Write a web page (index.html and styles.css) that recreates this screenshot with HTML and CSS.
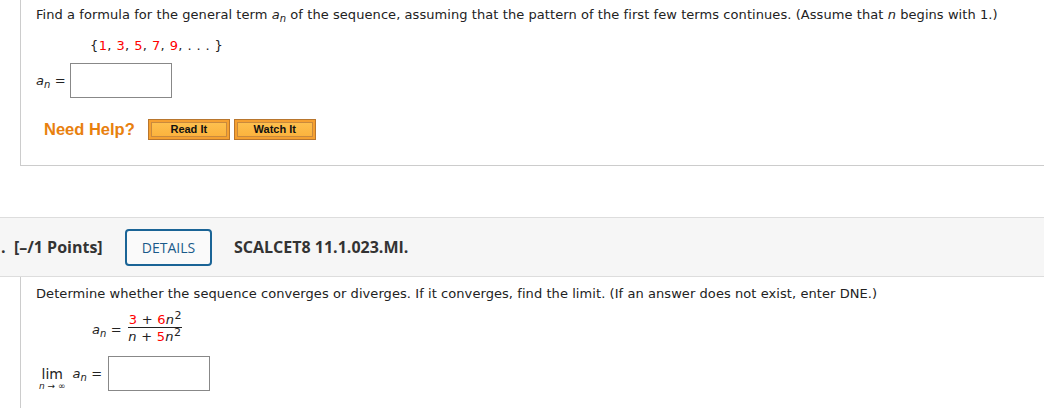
FILE: index.html
```html
<!DOCTYPE html>
<html>
<head>
<meta charset="utf-8">
<link rel="stylesheet" href="styles.css">
</head>
<body>
<div class="panel top">
  <p class="q">Find a formula for the general term <i>a<sub>n</sub></i> of the sequence, assuming that the pattern of the first few terms continues. (Assume that <i>n</i> begins with 1.)</p>
  <p class="seq">{<span class="r">1</span>, <span class="r">3</span>, <span class="r">5</span>, <span class="r">7</span>, <span class="r">9</span>, . . . }</p>
  <div class="ans">
    <span class="lbl"><i>a<sub>n</sub></i> =</span>
    <span class="box"></span>
  </div>
  <div class="help">
    <span class="need">Need Help?</span>
    <span class="btn">Read It</span>
    <span class="btn">Watch It</span>
  </div>
</div>
<div class="header">
  <span class="pts">.&nbsp; [–/1 Points]</span>
  <span class="details">DETAILS</span>
  <span class="code">SCALCET8 11.1.023.MI.</span>
</div>
<div class="panel bottom">
  <p class="q">Determine whether the sequence converges or diverges. If it converges, find the limit. (If an answer does not exist, enter DNE.)</p>
  <div class="formula">
    <span class="lbl"><i>a<sub>n</sub></i> =</span>
    <span class="frac">
      <span class="num"><span class="r">3</span> + <span class="r">6</span><i>n</i><sup>2</sup></span>
      <span class="den"><i>n</i> + <span class="r">5</span><i>n</i><sup>2</sup></span>
    </span>
  </div>
  <div class="limrow">
    <span class="lim">lim<span class="under"><i>n</i> → ∞</span></span>
    <span class="lbl"><i>a<sub>n</sub></i> =</span>
    <span class="box"></span>
  </div>
</div>
</body>
</html>
```
FILE: styles.css
```css
html, body { margin: 0; padding: 0; background: #fff; }
body { font-family: "DejaVu Sans", Verdana, sans-serif; font-size: 13px; color: #222; letter-spacing: 0.07px; }
.panel { margin-left: 20px; border-left: 1px solid #ccc; padding-left: 15px; }
.top { height: 166px; border-bottom: 1px solid #ccc; box-sizing: border-box; }
.q { margin: 0; padding-top: 7px; line-height: 16px; white-space: nowrap; }
i { font-style: italic; }
sub { font-size: 10px; vertical-align: -3px; line-height: 0; }
sup { font-size: 11px; vertical-align: 5px; line-height: 0; }
.r { color: #f00; }
.seq { margin: 15px 0 0 54px; line-height: 16px; letter-spacing: 0.4px; }
.ans { display: flex; align-items: center; margin-top: 9px; }
.lbl { margin-right: 4px; }
.box { display: inline-block; width: 100px; height: 33px; border: 1px solid #888; }
.help { display: flex; align-items: center; margin-top: 21px; margin-left: 8px; }
.need { font-family: "Liberation Sans", Arial, sans-serif; font-weight: bold; font-size: 16.5px; color: #e8800e; margin-right: 13px; letter-spacing: 0; }
.btn { display: inline-block; width: 76px; height: 15px; line-height: 15px; text-align: center; font-family: "Liberation Sans", Arial, sans-serif; font-weight: bold; font-size: 11px; color: #111; background: linear-gradient(#fec352, #fbb03a); border: 1px solid #b8762e; box-shadow: inset 0 0 0 2px #f5a030, inset 0 0 0 3px #c98a3e; padding: 2px 2px; margin-right: 4px; letter-spacing: 0; }
.header { margin-top: 51px; height: 58px; background: #f6f6f6; border-top: 1px solid #ddd; border-bottom: 1px solid #ddd; display: flex; align-items: center; font-family: "Open Sans", sans-serif; letter-spacing: 0; }
.pts { font-weight: bold; font-size: 16px; color: #333; margin-left: 1px; width: 124px; }
.details { display: inline-block; box-sizing: border-box; width: 87px; height: 37px; line-height: 33px; text-align: center; border: 2px solid #1a6496; border-radius: 4px; font-size: 14px; color: #1a5a8a; margin-right: 22px; background: #fafafa; }
.code { font-weight: bold; font-size: 16px; color: #333; }
.bottom { height: 140px; }
.bottom .q { padding-top: 9px; }
.formula { display: flex; align-items: center; margin-left: 56px; margin-top: 10px; }
.formula .lbl { margin-top: 0; margin-right: 6px; }
.frac { display: inline-flex; flex-direction: column; align-items: center; }
.num { border-bottom: 1px solid #222; padding: 0 0 0 1px; line-height: 15px; letter-spacing: 0.3px; }
.den { line-height: 18px; letter-spacing: 0.3px; }
.limrow { display: flex; align-items: center; margin-top: 10px; margin-left: 3px; }
.lim { display: inline-flex; flex-direction: column; align-items: center; line-height: 14px; margin-right: 7px; margin-top: 10px; font-size: 14px; }
.under { font-size: 9px; line-height: 10px; letter-spacing: 0; }
.limrow .lbl { margin-right: 6px; }
```
